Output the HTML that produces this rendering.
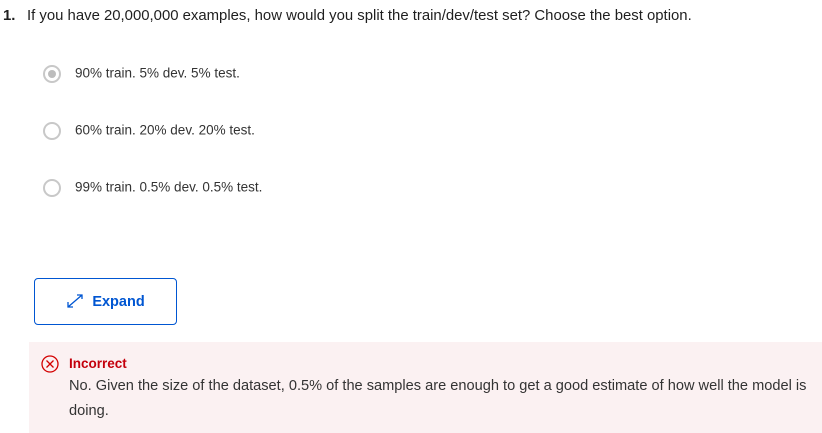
<!DOCTYPE html>
<html><head><style>
body{margin:0;width:822px;height:433px;background:#fff;font-family:"Liberation Sans",sans-serif;color:#1f1f1f;position:relative;overflow:hidden}
.a{position:absolute;white-space:nowrap}
.q{left:0;top:8px;font-size:14.9px}
.q b{display:inline-block;width:27px;padding-left:3px;box-sizing:border-box}
.opt{left:43px;font-size:13.5px;color:#333}
.r{display:inline-block;width:18px;height:18px;border:2px solid #c8c8c8;border-radius:50%;box-sizing:border-box;vertical-align:middle;margin-right:14px;position:relative;background:#fff}
.r.s::after{content:"";position:absolute;left:3px;top:3px;width:8px;height:8px;border-radius:50%;background:#bdbdbd}
.btn{left:34px;top:278px;width:143px;height:47px;border:1px solid #0056d2;border-radius:4px;box-sizing:border-box;color:#0056d2;font-weight:bold;font-size:14.5px;line-height:47px;text-align:center}
.fb{left:29px;top:342px;width:793px;height:91px;background:#fbf1f2}
</style></head><body>
<div class="a q"><b>1.</b>If you have 20,000,000 examples, how would you split the train/dev/test set? Choose the best option.</div>
<div class="a opt" style="top:65px"><span class="r s"></span>90% train. 5% dev. 5% test.</div>
<div class="a opt" style="top:122px"><span class="r"></span>60% train. 20% dev. 20% test.</div>
<div class="a opt" style="top:179px"><span class="r"></span>99% train. 0.5% dev. 0.5% test.</div>
<div class="a btn"><svg width="18" height="16" viewBox="0 0 18 16" style="vertical-align:middle;margin-right:8px;margin-top:-3px"><path d="M2 14L16 2M11 2h5v4M2 9v5h5" stroke="#0056d2" stroke-width="1.3" fill="none"/></svg>Expand</div>
<div class="a fb"></div>
<svg class="a" style="left:41px;top:355px" width="18" height="18" viewBox="0 0 18 18"><circle cx="9" cy="9" r="8" stroke="#d30000" stroke-width="1.3" fill="none"/><path d="M5.5 5.5l7 7M12.5 5.5l-7 7" stroke="#d30000" stroke-width="1.3"/></svg>
<div class="a" style="left:69px;top:356px;font-size:13.5px;font-weight:bold;color:#c4000c">Incorrect</div>
<div class="a" style="left:69px;top:374px;font-size:14.6px;line-height:25px;color:#333">No. Given the size of the dataset, 0.5% of the samples are enough to get a good estimate of how well the model is<br>doing.</div>
</body></html>
